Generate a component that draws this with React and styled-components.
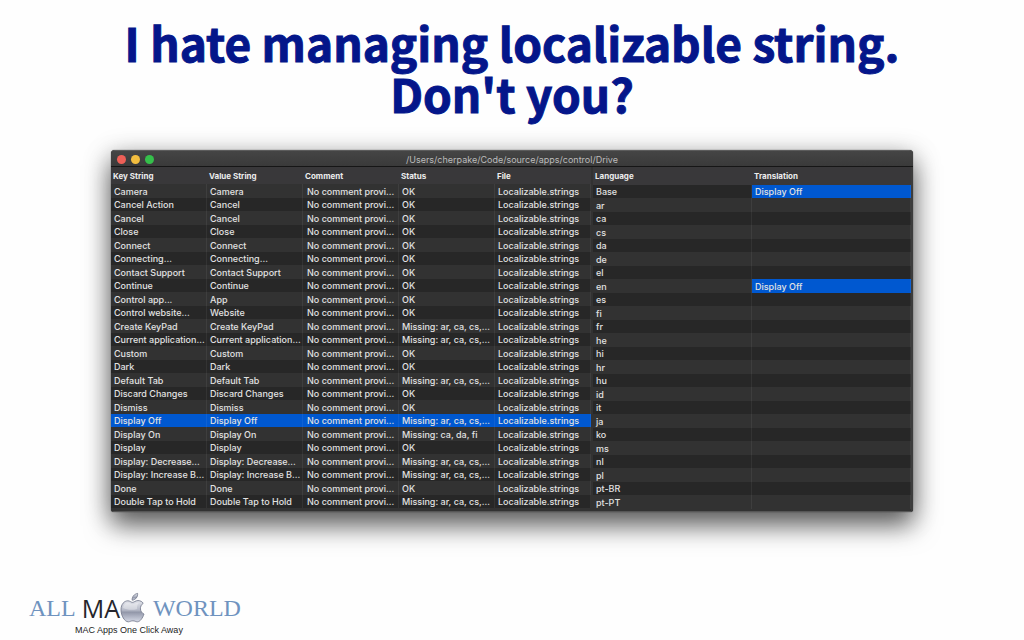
import React, { useState } from "react";
import styled, { createGlobalStyle } from "styled-components";

const GlobalStyle = createGlobalStyle`
  * {
    box-sizing: border-box;
  }

  body {
    margin: 0;
    background: #fefefe;
  }
`;

const Page = styled.main`
  display: flex;
  flex-direction: column;
  min-height: 100vh;
  padding: 17px 111px 4px;
`;

const Headline = styled.h1`
  margin: 0 -80px 31px;
  color: #04168a;
  font-family: "Noto Sans CJK SC", sans-serif;
  font-size: 46px;
  font-weight: 700;
  line-height: 51px;
  text-align: center;
  -webkit-text-stroke: 1px #04168a;
`;

const Window = styled.section`
  overflow: hidden;
  border-radius: 4px 4px 3px 3px;
  background: #323232;
  box-shadow: 0 14px 26px rgba(0, 0, 0, 0.55), 0 4px 26px rgba(0, 0, 0, 0.25),
    0 0 1px #222;
  font-family: Inter, "Liberation Sans", sans-serif;
`;

const TitleBar = styled.header`
  display: grid;
  grid-template-columns: 1fr auto 1fr;
  align-items: center;
  height: 17px;
  padding: 2px 6px 0;
  border-top: 1px solid #5c5c5c;
  border-bottom: 1px solid #161616;
  background: linear-gradient(#454545, #3a3a3a);
`;

const Lights = styled.div`
  display: flex;
  gap: 5px;
`;

const Light = styled.button`
  width: 9px;
  height: 9px;
  padding: 0;
  border: 0;
  border-radius: 50%;
  background: ${(props) => props.$color};
`;

const Path = styled.h2`
  margin: 0;
  color: #bcbcbc;
  font-size: 9px;
  font-weight: 400;
  line-height: 12px;
`;

const Panes = styled.div`
  display: grid;
  grid-template-columns: 60% 1fr;
  gap: 2px;
  padding-bottom: 2px;
  border-right: 2px solid #3c3c3c;
  border-bottom: 1px solid #565656;
`;

const Table = styled.table`
  width: 100%;
  align-self: start;
  table-layout: fixed;
  border-collapse: separate;
  border-spacing: 0;
  color: #e2e2e2;
  font-size: 9px;
  font-weight: 500;
`;

const HeadCell = styled.th`
  height: ${(props) => props.$height}px;
  padding: 0 2px;
  background: #39383a;
  color: #ececec;
  font-size: 8px;
  font-weight: 700;
  line-height: 12px;
  text-align: left;
`;

const Row = styled.tr`
  height: ${(props) => (props.$dark ? 13 : 14)}px;
  background: ${(props) => (props.$dark ? "#272727" : "#323232")};

  &[aria-selected="true"] {
    background: #0058d0;
  }
`;

const Cell = styled.td`
  overflow: hidden;
  padding: 0;
  padding-left: ${(props) => (props.$indent ? 4 : 3)}px;
  border-right: 1px solid rgba(255, 255, 255, 0.06);
  background: ${(props) => (props.$selected ? "#0058d0" : "transparent")};
  line-height: 13px;
  text-overflow: ellipsis;
  white-space: nowrap;
`;

const Brand = styled.footer`
  align-self: flex-start;
  margin: auto 0 0 -82px;
`;

const BrandLink = styled.a`
  display: flex;
  flex-direction: column;
  color: #6f93bf;
  text-decoration: none;
`;

const Wordmark = styled.span`
  display: flex;
  align-items: center;
  font-family: "Liberation Serif", serif;
  font-size: 24px;
  line-height: 30px;
`;

const Mac = styled.span`
  margin-left: 6px;
  color: #26262c;
  font-family: "Open Sans", sans-serif;
  font-size: 25px;
`;

const Apple = styled.svg`
  width: 25px;
  height: 32px;
  margin-right: 8px;
`;

const Tagline = styled.span`
  padding-left: 46px;
  color: #222;
  font-family: "Liberation Sans", sans-serif;
  font-size: 9px;
  line-height: 12px;
`;

const MISSING = "Missing: ar, ca, cs,...";

const strings = [
  { key: "Camera" },
  { key: "Cancel Action", value: "Cancel" },
  { key: "Cancel" },
  { key: "Close" },
  { key: "Connect" },
  { key: "Connecting..." },
  { key: "Contact Support" },
  { key: "Continue" },
  { key: "Control app...", value: "App" },
  { key: "Control website...", value: "Website" },
  { key: "Create KeyPad", status: MISSING },
  { key: "Current application...", status: MISSING },
  { key: "Custom" },
  { key: "Dark" },
  { key: "Default Tab", status: MISSING },
  { key: "Discard Changes" },
  { key: "Dismiss" },
  { key: "Display Off", status: MISSING },
  { key: "Display On", status: "Missing: ca, da, fi" },
  { key: "Display" },
  { key: "Display: Decrease...", status: MISSING },
  { key: "Display: Increase B...", status: MISSING },
  { key: "Done" },
  { key: "Double Tap to Hold", status: MISSING },
];

const languages = [
  "Base", "ar", "ca", "cs", "da", "de", "el", "en", "es", "fi", "fr", "he",
  "hi", "hr", "hu", "id", "it", "ja", "ko", "ms", "nl", "pl", "pt-BR", "pt-PT",
];

const translated = ["Base", "en"];

const StringsTable = ({ selected, onSelect }) => (
  <Table>
    <thead>
      <tr>
        {["Key String", "Value String", "Comment", "Status", "File"].map((name) => (
          <HeadCell key={name} $height={17} scope="col">
            {name}
          </HeadCell>
        ))}
      </tr>
    </thead>
    <tbody>
      {strings.map((item, index) => (
        <Row
          key={item.key}
          $dark={index % 2 === 1}
          aria-selected={item.key === selected}
          onClick={() => onSelect(item.key)}
        >
          <Cell>{item.key}</Cell>
          <Cell>{item.value || item.key}</Cell>
          <Cell $indent>No comment provi...</Cell>
          <Cell>{item.status || "OK"}</Cell>
          <Cell>Localizable.strings</Cell>
        </Row>
      ))}
    </tbody>
  </Table>
);

const TranslationsTable = ({ selected }) => (
  <Table>
    <thead>
      <tr>
        <HeadCell $height={18} scope="col">Language</HeadCell>
        <HeadCell $height={18} scope="col">Translation</HeadCell>
      </tr>
    </thead>
    <tbody>
      {languages.map((language, index) => (
        <Row key={language} $dark={index % 2 === 0}>
          <Cell>{language}</Cell>
          <Cell $selected={translated.includes(language)}>
            {translated.includes(language) ? selected : ""}
          </Cell>
        </Row>
      ))}
    </tbody>
  </Table>
);

const AppleMark = () => (
  <Apple viewBox="0 0 25 32" aria-hidden="true">
    <defs>
      <linearGradient id="chrome" x1="0" y1="0" x2="0" y2="1">
        <stop offset="0" stopColor="#e4e6ec" />
        <stop offset="0.45" stopColor="#b4b8c6" />
        <stop offset="0.55" stopColor="#9297a9" />
        <stop offset="1" stopColor="#d5d9e6" />
      </linearGradient>
    </defs>
    <g fill="url(#chrome)" stroke="#777d90" strokeWidth="0.9">
      <path d="M12.2 8.2C11.8 4.8 14.3 2 17.6 1.4C18 4.7 15.6 7.9 12.2 8.2Z" />
      <path d="M12.4 10.4C14 10.4 15.4 8.6 18 8.6C20.4 8.6 22.2 9.7 23.2 11.3C19.2 13.8 19.6 20.2 24 22.1C22.6 26 20.1 29.8 17.4 29.8C15.7 29.8 14.9 28.8 12.9 28.8C10.8 28.8 9.9 29.8 8.3 29.8C4.6 29.8 1 23.6 1 17.8C1 12 4.4 8.8 7.9 8.8C9.9 8.8 11.2 10.4 12.4 10.4Z" />
    </g>
    <path d="M3 16C3.4 12.6 5.6 10.6 8 10.7C10 10.9 11 12.4 13 12.1C15 11.8 16.4 10.3 19 10.8C17 13 16.8 15 17.2 17C12 18.6 7 17.8 3 16Z" fill="#fff" opacity="0.35" />
  </Apple>
);

const App = () => {
  const [selected, setSelected] = useState("Display Off");

  return (
    <>
      <GlobalStyle />
      <Page>
        <Headline>
          I hate managing localizable string.
          <br />
          Don't you?
        </Headline>
        <Window>
          <TitleBar>
            <Lights>
              <Light type="button" aria-label="Close" $color="#ee5f57" />
              <Light type="button" aria-label="Minimize" $color="#f2bd3f" />
              <Light type="button" aria-label="Zoom" $color="#35c04b" />
            </Lights>
            <Path>/Users/cherpake/Code/source/apps/control/Drive</Path>
          </TitleBar>
          <Panes>
            <StringsTable selected={selected} onSelect={setSelected} />
            <TranslationsTable selected={selected} />
          </Panes>
        </Window>
        <Brand>
          <BrandLink href="#home">
            <Wordmark>
              ALL
              <Mac>MA</Mac>
              <AppleMark />
              WORLD
            </Wordmark>
            <Tagline>MAC Apps One Click Away</Tagline>
          </BrandLink>
        </Brand>
      </Page>
    </>
  );
};

export default App;
